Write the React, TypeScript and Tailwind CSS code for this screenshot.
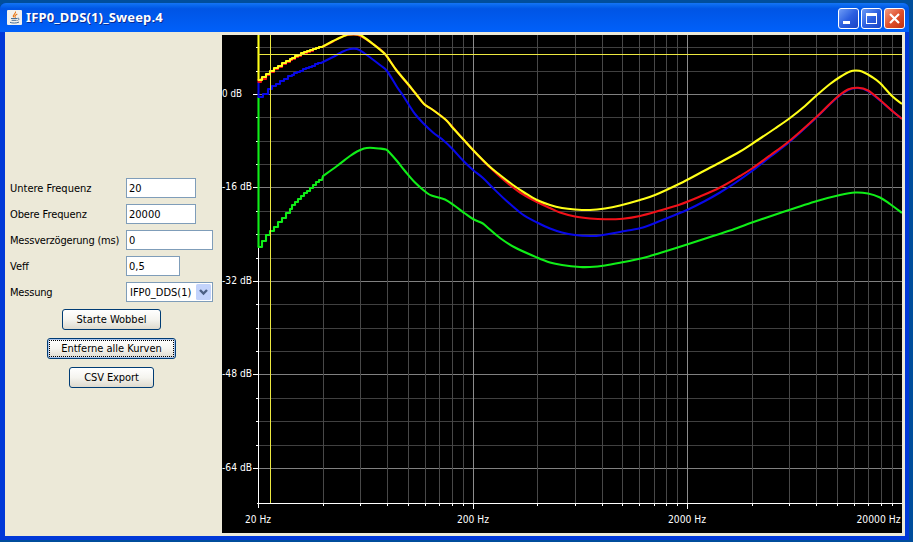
import { useState } from "react";

type Point = [number, number];

const FREQ_STEP = 214.5;
const LEFT = 258.5;
const TOP = 35;
const RIGHT = 902;
const BOTTOM = 503;

const decades = [0, 1, 2];
const minors = [2, 3, 4, 5, 6, 7, 8, 9];
const dbLines = Array.from({ length: 19 }, (_, i) => Math.round(94 + (i - 2) * 23.37) + 0.5);

const yLabels = [
  { text: "0 dB", y: 97, width: 20 },
  { text: "-16 dB", y: 190, width: 30 },
  { text: "-32 dB", y: 284, width: 30 },
  { text: "-48 dB", y: 377, width: 30 },
  { text: "-64 dB", y: 471, width: 30 },
];

const xLabels = [
  { text: "20 Hz", x: 245, width: 26 },
  { text: "200 Hz", x: 457, width: 32 },
  { text: "2000 Hz", x: 668, width: 38 },
  { text: "20000 Hz", x: 856.5, width: 44 },
];

const yellow: Point[] = [
  [270, 71], [281, 64], [290, 58.5], [300, 53.5], [310, 50], [320, 46.5], [333, 41], [345, 35.5], [349, 34.5],
  [358, 34.5], [362, 36], [373, 44], [385, 54], [390, 61], [397, 71], [408, 84], [416, 94], [424, 104],
  [433, 110], [446, 120], [452, 127], [463, 139], [473, 150], [489, 166], [500, 175], [513, 185], [525, 193],
  [537, 200], [550, 205], [562, 208], [575, 209.5], [590, 210], [605, 208.5], [620, 205.5], [640, 200],
  [655, 195], [680, 183.5], [700, 173], [720, 162.5], [740, 151.5], [757, 140.5], [775, 128.5], [790, 118],
  [805, 106], [817, 95], [830, 84], [840, 77], [850, 71.5], [856, 70.5], [862, 71.5], [872, 77], [880, 83],
  [892, 96], [902, 104],
];

const red: Point[] = [
  [270, 72], [281, 65], [290, 59.5], [300, 54.5], [310, 50.5], [320, 47], [333, 41.5], [345, 35.5], [358, 35],
  [373, 44], [385, 54], [397, 71], [416, 94], [424, 104], [433, 110], [446, 120], [463, 139], [473, 150],
  [489, 166.5], [505, 181], [520, 192.5], [537, 202], [550, 208], [560, 212.5], [575, 216.5], [590, 218.5],
  [605, 219.3], [623, 218.7], [640, 216], [660, 210.5], [680, 204.5], [700, 196.5], [720, 187.5], [740, 176],
  [752, 168.5], [770, 155.5], [790, 140.5], [817, 116.5], [835, 99], [848, 89.5], [858, 87.8], [868, 90.5],
  [880, 100], [890, 109], [902, 119],
];

const blue: Point[] = [
  [264, 94], [269, 88], [277, 83], [290, 75], [304, 69], [320, 62], [334, 56.5], [343, 51.5], [350, 49],
  [357, 49], [364, 53], [380, 65], [387, 71], [397, 87], [402, 94], [409, 105], [415, 114], [423, 123],
  [433, 132.5], [443, 140], [452, 148.5], [463, 160.5], [473, 170], [483, 178], [492, 187], [505, 199.5],
  [522, 214], [537, 222.5], [550, 228.5], [562, 232.5], [575, 235], [590, 236], [600, 235.5], [625, 231],
  [643, 227.5], [660, 221], [675, 215], [687, 210], [705, 201], [720, 192.5], [735, 183], [752, 171],
  [770, 157], [790, 141.5], [817, 117], [835, 99.5], [848, 90], [858, 88], [868, 91], [880, 100.5],
  [890, 109], [902, 119],
];

const green: Point[] = [
  [270, 231], [280, 220], [288, 210], [298, 198.5], [310, 188], [323, 176], [337, 166], [350, 156], [357, 151.5],
  [364, 148.5], [370, 147.8], [379, 148.5], [386, 149.5], [389, 152], [397, 161], [405, 171], [415, 182.5],
  [427, 193], [433, 196], [445, 199.5], [455, 206], [465, 213.5], [473, 219], [482, 223], [487, 227],
  [500, 238], [515, 247.5], [537, 257.5], [550, 262.5], [562, 265], [580, 267], [590, 267], [605, 265.5],
  [620, 262.8], [643, 258], [660, 253], [687, 244.5], [710, 237], [730, 230.5], [752, 222.5], [780, 213],
  [817, 201], [840, 195], [855, 192.5], [868, 193.5], [880, 197.5], [890, 204], [902, 213],
];

function valueAt(pts: Point[], x: number) {
  const i = Math.max(1, pts.findIndex((p) => p[0] >= x));
  const [x0, y0] = pts[i - 1];
  const [x1, y1] = pts[i];
  return y0 + ((x - x0) / (x1 - x0)) * (y1 - y0);
}

// The sweep is coarse at low frequencies, so it starts as a staircase and
// turns into a Catmull-Rom curve through the remaining points.
function toPath(pts: Point[], stepsUntil = 320) {
  let d = `L${pts[0][0]} ${pts[0][1]}`;
  let step = 4;
  for (let x = pts[0][0]; x < stepsUntil; x += step) {
    d += `V${Math.round(valueAt(pts, x))}H${x + step}`;
    if (x > 285) step = 3;
  }
  const rest = pts.filter((p) => p[0] > stepsUntil);
  d += `L${rest[0][0]} ${rest[0][1]}`;
  for (let i = 0; i < rest.length - 1; i++) {
    const p0 = rest[i - 1] || rest[i];
    const p1 = rest[i];
    const p2 = rest[i + 1];
    const p3 = rest[i + 2] || p2;
    const c1 = [p1[0] + (p2[0] - p0[0]) / 6, p1[1] + (p2[1] - p0[1]) / 6];
    const c2 = [p2[0] - (p3[0] - p1[0]) / 6, p2[1] - (p3[1] - p1[1]) / 6];
    d += ` C${c1[0]} ${c1[1]} ${c2[0]} ${c2[1]} ${p2[0]} ${p2[1]}`;
  }
  return d;
}

function SweepChart() {
  return (
    <svg
      width="680"
      height="498"
      viewBox="222 35 680 498"
      className="block shrink-0 bg-black font-['DejaVu_Sans_Condensed','DejaVu_Sans',sans-serif] text-[11px]"
    >
      {/* Grid */}
      <g shapeRendering="crispEdges">
        {dbLines.filter((y) => y < BOTTOM).map((y, i) => (
          <line key={y} x1={LEFT} x2={RIGHT} y1={y} y2={y} stroke={i % 4 === 2 ? "#808080" : "#404040"} />
        ))}
        {decades.map((d) => (
          <g key={d}>
            {d > 0 && (
              <line x1={LEFT + d * FREQ_STEP} x2={LEFT + d * FREQ_STEP} y1={TOP} y2={BOTTOM} stroke="#8c8c8c" />
            )}
            {minors.map((m) => {
              const x = Math.floor(LEFT + (d + Math.log10(m)) * FREQ_STEP) + 0.5;
              return (
                <g key={m}>
                  <line x1={x} x2={x} y1={TOP} y2={BOTTOM} stroke="#484848" />
                  <line x1={x} x2={x} y1={BOTTOM} y2={BOTTOM + 3} stroke="#fff" />
                </g>
              );
            })}
          </g>
        ))}
        {/* Axes */}
        <path d={`M${LEFT} ${TOP}V508M257 503.5H${RIGHT}M473.5 503V509M687.5 503V509`} stroke="#fff" fill="none" />
        {dbLines.filter((y) => y < BOTTOM).map((y, i) => (
          <line key={y} x1={i % 4 === 2 ? 253 : 256} x2={LEFT} y1={y} y2={y} stroke="#fff" />
        ))}
      </g>

      {/* Curves */}
      <g fill="none" strokeWidth="2.1" strokeLinejoin="round">
        <path d={`M258.5 97V247H262V241H266V235H270${toPath(green)}`} stroke="#10ee18" />
        <path d={`M258.5 82V97H263V94${toPath(blue)}`} stroke="#0808e8" />
        <path d={`M258.5 79V82H261V79H266V75H270${toPath(red)}`} stroke="#f01018" />
        <path d={`M258.5 35V80H262V77H266V74H270${toPath(yellow)}`} stroke="#ffff18" />
      </g>

      {/* Cursor */}
      <path d="M270.5 35V503M258 54.5H902" stroke="#ece840" fill="none" shapeRendering="crispEdges" />

      <g fill="#fff">
        {yLabels.map((l) => (
          <text key={l.text} x="222" y={l.y} textLength={l.width} lengthAdjust="spacingAndGlyphs">{l.text}</text>
        ))}
        {xLabels.map((l) => (
          <text key={l.text} x={l.x} y="523" textLength={l.width} lengthAdjust="spacingAndGlyphs">{l.text}</text>
        ))}
      </g>
    </svg>
  );
}

function TitleBar() {
  return (
    <header className="flex h-[29px] shrink-0 items-center bg-linear-to-b from-[#1475f5] via-[#0055e5] via-20% to-[#0060fa] pl-[7px] pr-1">
      <svg width="15" height="15" viewBox="0 0 15 15" className="shrink-0">
        <rect width="15" height="15" rx="1" fill="#f2f0ec" />
        <path d="M8.5 1.5C9.5 3.5 5 4.5 6.7 7.2M10.3 4C8.2 5 7.3 6 8.4 8" stroke="#e87818" strokeWidth="1.1" fill="none" />
        <path d="M4 8.5h6.3M4.6 10.3h5M10.5 8.3c2.2-.5 1.8 1.6 0 2.2M3 12.3c2 1 6.5 1 9-.2" stroke="#4a6e94" strokeWidth="1" fill="none" />
      </svg>
      <h1 className="mt-[-2px] ml-1 flex-1 whitespace-nowrap font-['Noto_Sans','Open_Sans',sans-serif] text-[13px] leading-4 font-bold tracking-[0.15px] text-white [text-shadow:1px_1px_0_#0a2a90]">
        IFP0_DDS(1)_Sweep.4
      </h1>
      <div className="mt-[2px] flex gap-[2px]">
        <button aria-label="Minimize" className="size-[21px] rounded-[3px] border border-white bg-linear-to-br from-[#6f9bf5] via-[#2c5fe0] to-[#1944c4]">
          <svg width="19" height="19"><rect x="4" y="12" width="7" height="3" fill="#fff" /></svg>
        </button>
        <button aria-label="Maximize" className="size-[21px] rounded-[3px] border border-white bg-linear-to-br from-[#6f9bf5] via-[#2c5fe0] to-[#1944c4]">
          <svg width="19" height="19" shapeRendering="crispEdges">
            <path d="M4.5 5V14.5H14.5V5" stroke="#fff" fill="none" />
            <rect x="4" y="4" width="11" height="3" fill="#fff" />
          </svg>
        </button>
        <button aria-label="Close" className="size-[21px] rounded-[3px] border border-white bg-linear-to-br from-[#f09a80] via-[#e0502c] to-[#c03010]">
          <svg width="19" height="19"><path d="M5 5L14 14M14 5L5 14" stroke="#fff" strokeWidth="2.2" /></svg>
        </button>
      </div>
    </header>
  );
}

function Field({ label, labelStyle, width, value, onChange }: {
  label: string;
  labelStyle: string;
  width: string;
  value: string;
  onChange: (v: string) => void;
}) {
  return (
    <label className="flex h-5 items-center">
      <span className={`w-[116px] pt-px whitespace-nowrap ${labelStyle}`}>{label}</span>
      <input
        value={value}
        onChange={(e) => onChange(e.target.value)}
        className={`h-5 border border-[#7f9db9] bg-white px-[2px] outline-none ${width}`}
      />
    </label>
  );
}

export default function App() {
  const [low, setLow] = useState("20");
  const [high, setHigh] = useState("20000");
  const [delay, setDelay] = useState("0");
  const [veff, setVeff] = useState("0,5");

  const button =
    "h-[21px] rounded-[3px] border border-[#003c74] bg-linear-to-b from-white via-[#f5f4ef] to-[#dedace] whitespace-nowrap";

  return (
    <div className="h-[542px] w-[913px] overflow-hidden bg-[#004e9c] pt-[3px] pr-1 text-black">
      <div className="flex h-[537px] flex-col overflow-hidden rounded-t-md bg-[#0038d8]">
        <TitleBar />
        <main className="mr-1 ml-[5px] flex h-[504px] bg-[#ece9d8] font-['DejaVu_Sans_Condensed','DejaVu_Sans',sans-serif] text-[11px] leading-[14px]">
          <section className="flex w-[217px] shrink-0 flex-col pt-[146px] pl-[5px]">
            <div className="flex flex-col gap-1.5">
              <Field label="Untere Frequenz" labelStyle="tracking-normal" width="w-[70px]" value={low} onChange={setLow} />
              <Field label="Obere Frequenz" labelStyle="tracking-[-0.1px]" width="w-[70px]" value={high} onChange={setHigh} />
              <Field label="Messverzögerung (ms)" labelStyle="tracking-[-0.2px]" width="w-[87px]" value={delay} onChange={setDelay} />
              <Field label="Veff" labelStyle="tracking-normal" width="w-[54px]" value={veff} onChange={setVeff} />
              <div className="flex h-5 items-center">
                <span className="w-[116px] pt-px tracking-[-0.2px]">Messung</span>
                <div className="flex h-5 w-[87px] items-center justify-between border border-[#7f9db9] bg-white pr-px pl-[3px]">
                  <span className="pt-px whitespace-nowrap">IFP0_DDS(1)</span>
                  <svg width="15" height="16" className="shrink-0">
                    <rect width="15" height="16" rx="1.5" fill="#c3d3fb" />
                    <path d="M4 6L7.5 9.5L11 6" stroke="#4d6185" strokeWidth="2.4" fill="none" />
                  </svg>
                </div>
              </div>
            </div>
            <div className="mt-[7px] flex w-[203px] flex-col items-center gap-2">
              <button className={`${button} w-[99px]`}>Starte Wobbel</button>
              <button className={`${button} w-[129px] p-px shadow-[inset_0_0_0_1px_#a9c4ee]`}>
                <span className="flex h-[17px] items-center justify-center border border-dotted border-black">
                  Entferne alle Kurven
                </span>
              </button>
              <button className={`${button} w-[85px] tracking-[-0.1px]`}>CSV Export</button>
            </div>
          </section>
          <div className="pt-[3px]">
            <SweepChart />
          </div>
        </main>
      </div>
    </div>
  );
}
